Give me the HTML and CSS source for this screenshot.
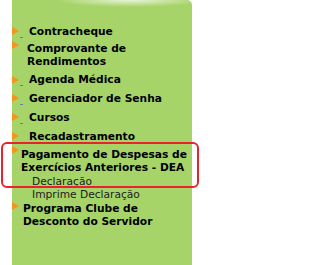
FILE: index.html
```html
<!DOCTYPE html>
<html lang="pt-BR">
<head>
<meta charset="utf-8">
<title>Menu</title>
<link rel="stylesheet" href="styles.css">
</head>
<body>
<nav class="panel">
  <div class="item">
    <span class="bullet w17"><span class="tri t2"></span><span class="us"></span></span>
    <a class="lnk">Contracheque</a>
  </div>
  <div class="item g4">
    <span class="bullet w15"><span class="tri tm1"></span></span>
    <a class="lnk">Comprovante de Rendimentos</a>
  </div>
  <div class="item g5">
    <span class="bullet w17"><span class="tri t3"></span><span class="us"></span></span>
    <a class="lnk">Agenda Médica</a>
  </div>
  <div class="item g6">
    <span class="bullet w17"><span class="tri t2"></span><span class="us"></span></span>
    <a class="lnk">Gerenciador de Senha</a>
  </div>
  <div class="item g6">
    <span class="bullet w17"><span class="tri t2"></span><span class="us"></span></span>
    <a class="lnk">Cursos</a>
  </div>
  <div class="item g6">
    <span class="bullet w17"><span class="tri t2"></span></span>
    <a class="lnk">Recadastramento</a>
  </div>
  <div class="item g5">
    <span class="bullet w9"><span class="tri tm2"></span></span>
    <a class="lnk">Pagamento de Despesas de Exercícios Anteriores - DEA</a>
  </div>
  <div class="item sub g1"><a class="sublnk">Declaração</a></div>
  <div class="item sub"><a class="sublnk">Imprime Declaração</a></div>
  <div class="item g1">
    <span class="bullet w11"><span class="tri"></span></span>
    <a class="lnk">Programa Clube de Desconto do Servidor</a>
  </div>
</nav>
<div class="callout"></div>
</body>
</html>
```

FILE: styles.css
```css
html, body {
  margin: 0;
  padding: 0;
}
body {
  position: relative;
  width: 202px;
  height: 265px;
  overflow: hidden;
  background: #ffffff;
  font-family: "DejaVu Sans", Verdana, sans-serif;
  font-size: 8pt;
}
.panel {
  margin-left: 12px;
  width: 180px;
  height: 265px;
  box-sizing: border-box;
  padding-top: 25px;
  display: flex;
  flex-direction: column;
  background:
    radial-gradient(75px 7px at 118px 0, rgba(255,255,255,0.75), rgba(255,255,255,0)),
    #a6d468;
  border-top-right-radius: 5px;
}
.item {
  display: flex;
  align-items: flex-start;
  line-height: 13px;
}
.g1 { margin-top: 1px; }
.g4 { margin-top: 4px; }
.g5 { margin-top: 5px; }
.g6 { margin-top: 6px; }
.bullet {
  flex: none;
  display: flex;
  align-items: flex-start;
  height: 13px;
}
.w9 { width: 9px; }
.w11 { width: 11px; }
.w15 { width: 15px; }
.w17 { width: 17px; }
.tri {
  flex: none;
  width: 0;
  height: 0;
  border-left: 7px solid #f7941e;
  border-top: 4px solid transparent;
  border-bottom: 4px solid transparent;
}
.t2 { margin-top: 2px; }
.t3 { margin-top: 3px; }
.tm1 { margin-top: -1px; }
.tm2 { margin-top: -2px; }
.us {
  align-self: flex-end;
  width: 3px;
  height: 1px;
  margin-left: 1px;
  background: #5d80a6;
}
.lnk {
  flex: 1;
  min-width: 0;
  color: #000;
  font-weight: bold;
}
.sub {
  padding-left: 20px;
}
.sublnk {
  color: #1c1c1c;
}
.callout {
  position: absolute;
  left: 1px;
  top: 142px;
  width: 198px;
  height: 46px;
  box-sizing: border-box;
  border: 2px solid #e8232c;
  border-radius: 6px;
}
```
